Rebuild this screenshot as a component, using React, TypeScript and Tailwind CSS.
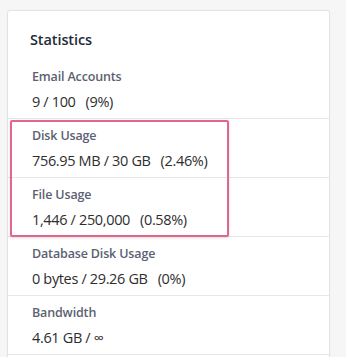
import React from "react";

type Stat = { label: string; used: string; pct?: string };

const STATS: Stat[] = [
  { label: "Email Accounts", used: "9 / 100", pct: "(9%)" },
  { label: "Disk Usage", used: "756.95 MB / 30 GB", pct: "(2.46%)" },
  { label: "File Usage", used: "1,446 / 250,000", pct: "(0.58%)" },
  { label: "Database Disk Usage", used: "0 bytes / 29.26 GB", pct: "(0%)" },
  { label: "Bandwidth", used: "4.61 GB / ∞" },
];

const StatRow = ({ stat }: { stat: Stat }) => (
  <div className="border-b border-[#e6e6e6] pl-6 pr-4 pt-2 pb-[5px]">
    <div className="text-[12.5px] leading-[18px] font-semibold tracking-[-0.15px] text-[#5b6172]">
      {stat.label}
    </div>
    <div className="mt-[5px] flex gap-[10px] text-[14.5px] leading-[22px] tracking-[-0.35px] text-[#2e2e2e]">
      <span>{stat.used}</span>
      {stat.pct && <span>{stat.pct}</span>}
    </div>
  </div>
);

export default function App() {
  return (
    <div
      className="h-[357px] w-[346px] overflow-hidden bg-[#f6f6f6] pl-[7px] pt-[10px]"
      style={{ fontFamily: '"Open Sans", "Liberation Sans", sans-serif' }}
    >
      <div className="relative min-h-[360px] w-[323px] rounded-[3px] border border-[#e3e3e3] bg-white shadow-[0_0_2px_rgba(0,0,0,0.04)]">
        <h2 className="pl-[22px] pt-[19px] pb-[10px] text-[14.5px] leading-[20px] font-semibold tracking-[-0.1px] text-[#1d2b3a]">
          Statistics
        </h2>
        {STATS.map((s) => (
          <StatRow key={s.label} stat={s} />
        ))}

        {/* highlight annotation */}
        <div className="pointer-events-none absolute left-[2px] top-[109px] h-[117px] w-[219px] rounded-[2px] border-2 border-[#e2658a] shadow-[0_1px_3px_rgba(0,0,0,0.15)]" />
      </div>
    </div>
  );
}
